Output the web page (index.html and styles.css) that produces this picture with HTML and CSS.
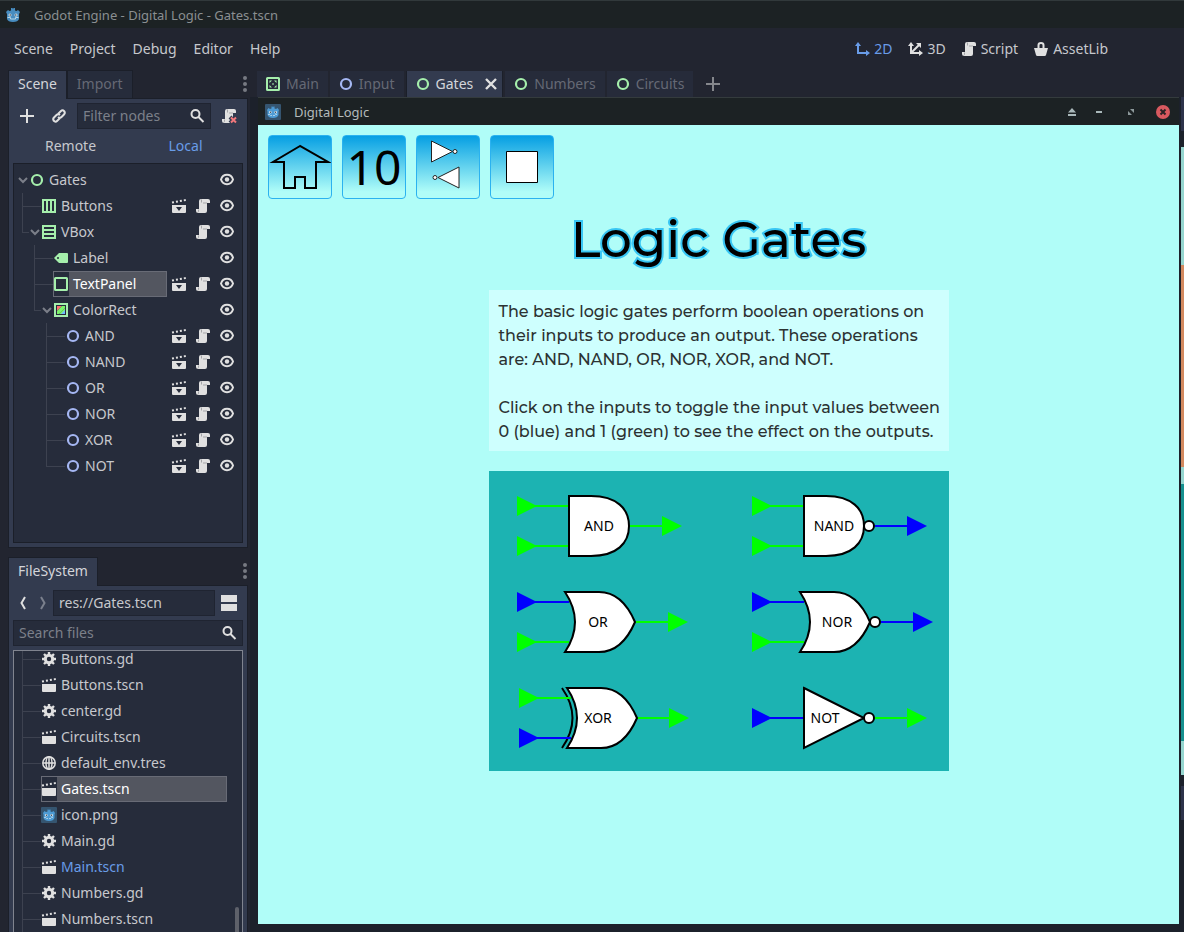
FILE: index.html
```html
<!DOCTYPE html>
<html lang="en">
<head>
<meta charset="utf-8">
<meta name="viewport" content="width=device-width, initial-scale=1">
<title>Godot Engine - Digital Logic - Gates.tscn</title>
<link rel="stylesheet" href="styles.css">
</head>
<body>
<svg class="sprite" aria-hidden="true">
  <symbol id="godot" viewBox="0 0 16 16"><path fill="#478cbf" d="M1 5l2-2 1.500 1L6 3.500V1h1.500L8 2l.5-1H10v2.500l1.500.5L13 3l2 2-1 2v5q-1 3-6 3t-6-3V7z"/><path fill="none" stroke="#b5d5e6" d="M2.500 10.500h3v1.500h5v-1.500h3"/><circle cx="5" cy="8" r="1.500" fill="#dceaf2"/><circle cx="11" cy="8" r="1.500" fill="#dceaf2"/><circle cx="5.200" cy="8" r=".8" fill="#3b4048"/><circle cx="10.800" cy="8" r=".8" fill="#3b4048"/></symbol>
  <symbol id="godot-tile" viewBox="0 0 16 16"><rect width="16" height="16" rx="1" fill="#355570"/><path fill="#4d9bd4" d="M2 6l1.500-2L5 5l1.500-.5V2.500h1L8 3.500l.5-1h1v2L11 5l1.500-1L14 6l-.5 1.500V11q-1 3-5.500 3t-5.500-3V7.500z"/><path fill="none" stroke="#a9cfe8" stroke-dasharray="2 1" d="M3 10.500h2.500v1h5v-1H13"/><circle cx="5.300" cy="8.200" r="1.300" fill="#dceaf2"/><circle cx="10.700" cy="8.200" r="1.300" fill="#dceaf2"/><circle cx="5.500" cy="8.200" r=".7" fill="#3b4048"/><circle cx="10.500" cy="8.200" r=".7" fill="#3b4048"/></symbol>
  <symbol id="ring" viewBox="0 0 16 16"><circle cx="8" cy="8" r="5" fill="none" stroke="currentColor" stroke-width="2.200"/></symbol>
  <symbol id="control" viewBox="0 0 16 16"><rect x="2" y="2" width="12" height="12" rx=".5" fill="none" stroke="currentColor" stroke-width="2"/></symbol>
  <symbol id="center" viewBox="0 0 16 16"><rect x="2" y="2" width="12" height="12" rx=".5" fill="none" stroke="currentColor" stroke-width="2"/><path fill="currentColor" d="M4.500 4.500h2.500L4.500 7zM11.500 4.500v2.500L9 4.500zM4.500 11.500V9L7 11.500zM11.500 11.500H9L11.500 9zM7.300 7.300h1.400v1.400H7.300z"/></symbol>
  <symbol id="hbox" viewBox="0 0 16 16"><path fill="none" stroke="currentColor" stroke-width="2" d="M2 2h12v12H2zM6 2v12M10 2v12"/></symbol>
  <symbol id="vbox" viewBox="0 0 16 16"><path fill="none" stroke="currentColor" stroke-width="2" d="M2 2h12v12H2zM2 6h12M2 10h12"/></symbol>
  <symbol id="label" viewBox="0 0 16 16"><path fill="currentColor" fill-rule="evenodd" d="M6 3L1 8l5 5h8q1 0 1-1V4q0-1-1-1zM5 7a1 1 0 1 1 0 2 1 1 0 0 1 0-2z"/></symbol>
  <symbol id="colorrect" viewBox="0 0 16 16"><path d="M2 2h12v12H2z" fill="#262c3b" stroke="#a5efac" stroke-width="2"/><path d="M4 4h5L4 9z" fill="#ff7070"/><path d="M9 4h3v2l-6 6H4V9z" fill="#7af56a"/><path d="M12 6v3l-3 3H6z" fill="#7af56a"/><path d="M12 8v4H8z" fill="#70bfff"/></symbol>
  <symbol id="script" viewBox="0 0 16 16"><path fill="currentColor" d="M6 1h7q2 0 2 2v2h-3v8q0 2-2 2H3q-2 0-2-2v-2h3V3q0-2 2-2z"/><path fill="none" stroke="#a4a5a8" d="M6.500 1.500v3M12 5H8M3.500 11.500v2q-.3 1-1 1"/></symbol>
  <symbol id="scene" viewBox="0 0 16 16"><path fill="currentColor" d="M1 7h14v7q0 1-1 1H2q-1 0-1-1z"/><path fill="none" stroke="currentColor" stroke-width="2" stroke-dasharray="2 2" d="M1 4.500L15 2"/></symbol>
  <symbol id="instance" viewBox="0 0 16 16"><path fill="currentColor" fill-rule="evenodd" d="M1 7h14v7q0 1-1 1H2q-1 0-1-1zM5 9h6l-3 4z"/><path fill="none" stroke="currentColor" stroke-width="2" stroke-dasharray="2 2" d="M1 4.500L15 2"/></symbol>
  <symbol id="eye" viewBox="0 0 16 16"><path fill="none" stroke="currentColor" stroke-width="2" d="M2 7.500q1.500-4.700 6-4.700t6 4.700q-1.500 4.700-6 4.700t-6-4.700z"/><circle cx="8" cy="7.500" r="2.200" fill="currentColor"/></symbol>
  <symbol id="chevron" viewBox="0 0 12 12"><path fill="none" stroke="#7b7f89" stroke-width="2" d="M2 4l4 4 4-4"/></symbol>
  <symbol id="gear" viewBox="0 0 16 16"><circle cx="8" cy="8" r="3.700" fill="none" stroke="currentColor" stroke-width="3"/><path stroke="currentColor" stroke-width="2.400" d="M8 1v3M8 12v3M1 8h3M12 8h3M3 3l2 2M11 11l2 2M13 3l-2 2M5 11l-2 2"/></symbol>
  <symbol id="globe" viewBox="0 0 16 16"><g fill="none" stroke="currentColor" stroke-width="1.500"><circle cx="8" cy="8" r="6.200"/><ellipse cx="8" cy="8" rx="3" ry="6.200"/><path d="M2 8h12M8 2v12"/></g></symbol>
  <symbol id="search" viewBox="0 0 16 16"><g fill="none" stroke="currentColor" stroke-width="2"><circle cx="6.500" cy="6" r="4"/><path d="M9.500 9l5 5"/></g></symbol>
  <symbol id="plus" viewBox="0 0 16 16"><path stroke="currentColor" stroke-width="2" d="M8 1v14M1 8h14"/></symbol>
  <symbol id="link" viewBox="0 0 16 16"><g fill="none" stroke="currentColor" stroke-width="2"><path d="M7 6l3-3q1.500-1.500 3.200.2Q14.500 5 13 6.500l-2.500 2.500q-1.500 1.500-3.500 0"/><path d="M9 10l-3 3q-1.500 1.500-3.200-.2Q1.500 11 3 9.500L5.500 7Q7 5.500 9 7"/></g></symbol>
  <symbol id="cross" viewBox="0 0 16 16"><path stroke="currentColor" stroke-width="2.400" d="M3 3l10 10M13 3L3 13"/></symbol>
  <symbol id="dots" viewBox="0 0 6 16"><g fill="currentColor"><circle cx="3" cy="2" r="2"/><circle cx="3" cy="8" r="2"/><circle cx="3" cy="14" r="2"/></g></symbol>
</svg>

<div class="app">
  <header class="titlebar"><svg class="icon"><use href="#godot"/></svg><span>Godot Engine - Digital Logic - Gates.tscn</span></header>

  <nav class="menubar">
    <button>Scene</button><button>Project</button><button>Debug</button><button>Editor</button><button>Help</button>
    <div class="modes">
      <button class="active"><svg class="icon" viewBox="0 0 16 16"><path fill="none" stroke="currentColor" stroke-width="2" d="M4 3v9h9"/><path fill="currentColor" d="M1 5l3-4 3 4zM12 9l4 3-4 3z"/></svg>2D</button>
      <button><svg class="icon" viewBox="0 0 16 16"><path fill="none" stroke="currentColor" stroke-width="2" d="M4 3v9h9M4 12l8-8"/><path fill="currentColor" d="M1 5l3-4 3 4zM12 9l4 3-4 3zM9 2h5v5z"/></svg>3D</button>
      <button><svg class="icon"><use href="#script"/></svg>Script</button>
      <button><svg class="icon" viewBox="0 0 16 16"><path fill="none" stroke="currentColor" stroke-width="2" d="M5.500 8V4q0-2 2.500-2t2.500 2v4"/><path fill="currentColor" d="M1 7h14l-2 7q-.3 1-1.300 1H4.300Q3.300 15 3 14z"/></svg>AssetLib</button>
    </div>
  </nav>

  <main class="workspace">
    <div class="docks">
      <section class="dock scene-dock">
        <div class="dock-tabs"><button class="tab active">Scene</button><button class="tab">Import</button><button class="more" aria-label="Dock options"><svg><use href="#dots"/></svg></button></div>
        <div class="dock-body">
          <div class="tools spaced">
            <button class="tool" aria-label="Add node"><svg class="icon"><use href="#plus"/></svg></button>
            <button class="tool" aria-label="Instance scene"><svg class="icon"><use href="#link"/></svg></button>
            <label class="field"><input type="text" placeholder="Filter nodes" aria-label="Filter nodes"><svg class="icon"><use href="#search"/></svg></label>
            <button class="tool" aria-label="Detach script"><svg class="icon" viewBox="0 0 16 16"><use href="#script"/><path stroke="#333b4f" stroke-width="4" d="M9 9l6 6M15 9l-6 6"/><path stroke="#f3787c" stroke-width="2" d="M10 9.500l5 5M15 9.500l-5 5"/></svg></button>
          </div>
          <div class="tools"><button class="half">Remote</button><button class="half active">Local</button></div>
          <ul class="tree">
            <li class="row"><svg class="cell"><use href="#chevron"/></svg><span class="item"><svg class="icon green"><use href="#ring"/></svg>Gates</span><svg class="icon"><use href="#eye"/></svg></li>
            <li class="row"><i class="cell tee"></i><i class="cell dash"></i><span class="item"><svg class="icon green"><use href="#hbox"/></svg>Buttons</span><svg class="icon"><use href="#instance"/></svg><svg class="icon"><use href="#script"/></svg><svg class="icon"><use href="#eye"/></svg></li>
            <li class="row"><i class="cell elbow"></i><svg class="cell"><use href="#chevron"/></svg><span class="item"><svg class="icon green"><use href="#vbox"/></svg>VBox</span><svg class="icon"><use href="#script"/></svg><svg class="icon"><use href="#eye"/></svg></li>
            <li class="row"><i class="cell"></i><i class="cell tee"></i><i class="cell dash"></i><span class="item"><svg class="icon green"><use href="#label"/></svg>Label</span><svg class="icon"><use href="#eye"/></svg></li>
            <li class="row"><i class="cell"></i><i class="cell tee"></i><i class="cell dash"></i><span class="item selected"><svg class="icon green"><use href="#control"/></svg>TextPanel</span><svg class="icon"><use href="#instance"/></svg><svg class="icon"><use href="#script"/></svg><svg class="icon"><use href="#eye"/></svg></li>
            <li class="row"><i class="cell"></i><i class="cell elbow"></i><svg class="cell"><use href="#chevron"/></svg><span class="item"><svg class="icon"><use href="#colorrect"/></svg>ColorRect</span><svg class="icon"><use href="#eye"/></svg></li>
            <li class="row"><i class="cell"></i><i class="cell"></i><i class="cell tee"></i><i class="cell dash"></i><span class="item"><svg class="icon blue"><use href="#ring"/></svg>AND</span><svg class="icon"><use href="#instance"/></svg><svg class="icon"><use href="#script"/></svg><svg class="icon"><use href="#eye"/></svg></li>
            <li class="row"><i class="cell"></i><i class="cell"></i><i class="cell tee"></i><i class="cell dash"></i><span class="item"><svg class="icon blue"><use href="#ring"/></svg>NAND</span><svg class="icon"><use href="#instance"/></svg><svg class="icon"><use href="#script"/></svg><svg class="icon"><use href="#eye"/></svg></li>
            <li class="row"><i class="cell"></i><i class="cell"></i><i class="cell tee"></i><i class="cell dash"></i><span class="item"><svg class="icon blue"><use href="#ring"/></svg>OR</span><svg class="icon"><use href="#instance"/></svg><svg class="icon"><use href="#script"/></svg><svg class="icon"><use href="#eye"/></svg></li>
            <li class="row"><i class="cell"></i><i class="cell"></i><i class="cell tee"></i><i class="cell dash"></i><span class="item"><svg class="icon blue"><use href="#ring"/></svg>NOR</span><svg class="icon"><use href="#instance"/></svg><svg class="icon"><use href="#script"/></svg><svg class="icon"><use href="#eye"/></svg></li>
            <li class="row"><i class="cell"></i><i class="cell"></i><i class="cell tee"></i><i class="cell dash"></i><span class="item"><svg class="icon blue"><use href="#ring"/></svg>XOR</span><svg class="icon"><use href="#instance"/></svg><svg class="icon"><use href="#script"/></svg><svg class="icon"><use href="#eye"/></svg></li>
            <li class="row"><i class="cell"></i><i class="cell"></i><i class="cell elbow"></i><i class="cell dash"></i><span class="item"><svg class="icon blue"><use href="#ring"/></svg>NOT</span><svg class="icon"><use href="#instance"/></svg><svg class="icon"><use href="#script"/></svg><svg class="icon"><use href="#eye"/></svg></li>
          </ul>
        </div>
      </section>

      <section class="dock files-dock">
        <div class="dock-tabs"><button class="tab active">FileSystem</button><button class="more" aria-label="Dock options"><svg><use href="#dots"/></svg></button></div>
        <div class="dock-body">
          <div class="tools">
            <button class="nav" aria-label="Back"><svg class="icon" viewBox="0 0 16 16"><path fill="none" stroke="currentColor" stroke-width="2" d="M10 2L6.500 8l3.500 6"/></svg></button>
            <button class="nav dim" aria-label="Forward"><svg class="icon" viewBox="0 0 16 16"><path fill="none" stroke="currentColor" stroke-width="2" d="M6 2l3.500 6L6 14"/></svg></button>
            <label class="field"><input type="text" value="res://Gates.tscn" aria-label="Path"></label>
            <button class="tool" aria-label="Split mode"><svg class="icon" viewBox="0 0 16 16"><path fill="currentColor" d="M0 0h16v7H0zM0 9h16v7H0z"/></svg></button>
          </div>
          <label class="field"><input type="text" placeholder="Search files" aria-label="Search files"><svg class="icon"><use href="#search"/></svg></label>
          <div class="files">
            <ul class="file-list">
              <li class="row"><i class="cell tee"></i><i class="cell dash"></i><span class="item"><svg class="icon"><use href="#gear"/></svg>Buttons.gd</span></li>
              <li class="row"><i class="cell tee"></i><i class="cell dash"></i><span class="item"><svg class="icon"><use href="#scene"/></svg>Buttons.tscn</span></li>
              <li class="row"><i class="cell tee"></i><i class="cell dash"></i><span class="item"><svg class="icon"><use href="#gear"/></svg>center.gd</span></li>
              <li class="row"><i class="cell tee"></i><i class="cell dash"></i><span class="item"><svg class="icon"><use href="#scene"/></svg>Circuits.tscn</span></li>
              <li class="row"><i class="cell tee"></i><i class="cell dash"></i><span class="item"><svg class="icon"><use href="#globe"/></svg>default_env.tres</span></li>
              <li class="row"><i class="cell tee"></i><i class="cell dash"></i><span class="item selected"><svg class="icon"><use href="#scene"/></svg>Gates.tscn</span></li>
              <li class="row"><i class="cell tee"></i><i class="cell dash"></i><span class="item"><svg class="icon"><use href="#godot-tile"/></svg>icon.png</span></li>
              <li class="row"><i class="cell tee"></i><i class="cell dash"></i><span class="item"><svg class="icon"><use href="#gear"/></svg>Main.gd</span></li>
              <li class="row"><i class="cell tee"></i><i class="cell dash"></i><span class="item main-scene"><svg class="icon"><use href="#scene"/></svg>Main.tscn</span></li>
              <li class="row"><i class="cell tee"></i><i class="cell dash"></i><span class="item"><svg class="icon"><use href="#gear"/></svg>Numbers.gd</span></li>
              <li class="row"><i class="cell tee"></i><i class="cell dash"></i><span class="item"><svg class="icon"><use href="#scene"/></svg>Numbers.tscn</span></li>
            </ul>
            <div class="track"><div class="thumb"></div></div>
          </div>
        </div>
      </section>
    </div>

    <div class="editor">
      <div class="scene-tabs">
        <button class="stab"><svg class="icon green"><use href="#center"/></svg>Main</button>
        <button class="stab"><svg class="icon blue"><use href="#ring"/></svg>Input</button>
        <button class="stab active"><svg class="icon green"><use href="#ring"/></svg>Gates<svg class="icon close"><use href="#cross"/></svg></button>
        <button class="stab"><svg class="icon green"><use href="#ring"/></svg>Numbers</button>
        <button class="stab"><svg class="icon green"><use href="#ring"/></svg>Circuits</button>
        <button class="add" aria-label="New scene"><svg class="icon"><use href="#plus"/></svg></button>
      </div>
      <div class="stage">
        <section class="window">
          <header class="window-bar">
            <svg class="icon"><use href="#godot-tile"/></svg><h2>Digital Logic</h2>
            <div class="controls">
              <div class="pair">
                <button aria-label="Keep above"><svg class="icon" viewBox="0 0 16 16"><path fill="#a9b8ba" d="M4 8.500L8 4l4 4.500zM4 10h8v2H4z"/></svg></button>
                <button aria-label="Minimize"><svg class="icon" viewBox="0 0 16 16"><path fill="#a9b8ba" d="M5 7h6v2H5z"/></svg></button>
              </div>
              <button aria-label="Maximize"><svg class="icon" viewBox="0 0 16 16"><path fill="#8d999b" d="M7 5h4v4zM5 7l4 4H5z"/></svg></button>
              <button aria-label="Close"><svg class="icon" viewBox="0 0 16 16"><circle cx="8" cy="8" r="7" fill="#d8595f"/><path stroke="#2a2326" stroke-width="2" d="M5.500 5.500l5 5M10.500 5.500l-5 5"/></svg></button>
            </div>
          </header>
          <div class="game">
            <div class="game-buttons">
              <button aria-label="Home"><svg viewBox="0 0 62 62"><path fill="none" stroke="#000" stroke-width="2" d="M31 10L4 26h11v26h11V41h10v11h11V26h12z"/></svg></button>
              <button class="digits">10</button>
              <button aria-label="Gates"><svg viewBox="0 0 62 62"><g fill="#fff" stroke="#222"><path d="M14.500 5l21 10.500L14.500 26zM42 31v21L21 41.500z"/><circle cx="38" cy="15.500" r="2"/><circle cx="18" cy="41.500" r="2"/></g></svg></button>
              <button aria-label="Circuits"><svg viewBox="0 0 62 62"><path fill="#fff" stroke="#000" d="M15.500 15.500h31v31h-31z"/></svg></button>
            </div>
            <div class="column">
              <h1>Logic Gates</h1>
              <div class="intro">
                <p>The basic logic gates perform boolean operations on<br>their inputs to produce an output. These operations<br>are: AND, NAND, OR, NOR, XOR, and NOT.</p>
                <p>Click on the inputs to toggle the input values between<br>0 (blue) and 1 (green) to see the effect on the outputs.</p>
              </div>
              <svg class="gates" viewBox="0 0 460 300" role="img" aria-label="Six logic gates">
                <defs>
                  <g id="wire-in"><path d="M0-10L20 0L0 10z"/><path d="M18-1h34v2H18z"/></g>
                  <g id="wire-out"><path d="M0-1h33v2H0z"/><path d="M32-10L52 0L32 10z"/></g>
                  <path id="and-body" d="M0-30H22C48-30 60-17 60 0S48 30 22 30H0z"/>
                  <path id="or-body" d="M0-30H34C53-30 64-14 70 0C64 14 53 30 34 30H0Q20 0 0-30z"/>
                </defs>
                <g fill="#0f0">
                  <use href="#wire-in" x="28" y="35"/><use href="#wire-in" x="28" y="75"/><use href="#wire-out" x="141" y="55"/>
                  <use href="#wire-in" x="263" y="35"/><use href="#wire-in" x="263" y="75"/>
                  <use href="#wire-in" x="28" y="171"/><use href="#wire-out" x="147" y="151"/>
                  <use href="#wire-in" x="263" y="171"/>
                  <use href="#wire-out" x="148" y="247"/><use href="#wire-out" x="386" y="247"/>
                </g>
                <g fill="#00f">
                  <use href="#wire-out" x="386" y="55"/>
                  <use href="#wire-in" x="28" y="131"/><use href="#wire-in" x="263" y="131"/><use href="#wire-out" x="392" y="151"/>
                  <use href="#wire-in" x="263" y="247"/>
                </g>
                <g fill="#fff" stroke="#000" stroke-width="2">
                  <use href="#and-body" x="80" y="55"/><use href="#and-body" x="315" y="55"/><circle cx="380" cy="55" r="5"/>
                  <use href="#or-body" x="76" y="151"/><use href="#or-body" x="311" y="151"/><circle cx="386" cy="151" r="5"/>
                  <use href="#or-body" x="78" y="247"/><path fill="none" d="M73 217Q94 247 73 277"/>
                  <path d="M315 217l60 30-60 30z"/><circle cx="380" cy="247" r="5"/>
                </g>
                <use href="#wire-in" x="30" y="227" fill="#0f0"/><use href="#wire-in" x="30" y="267" fill="#00f"/>
                <g class="gate-names"><text x="110" y="60">AND</text><text x="345" y="60">NAND</text><text x="109" y="156">OR</text><text x="348" y="156">NOR</text><text x="109" y="252">XOR</text><text x="336" y="252">NOT</text></g>
              </svg>
            </div>
          </div>
        </section>
        <div class="behind"></div>
      </div>
    </div>
  </main>
</div>
</body>
</html>
```
FILE: styles.css
```css
* { box-sizing: border-box; }
body { margin: 0; background: #222530; color: #c6c8cd; font: 14px/20px "Noto Sans", sans-serif; }
button { margin: 0; padding: 0; border: 0; background: none; color: inherit; font: inherit; }
ul { margin: 0; padding: 0; list-style: none; }
svg { display: block; flex: none; }
.sprite { position: absolute; width: 0; height: 0; }
.icon { width: 16px; height: 16px; color: #e0e0e0; }
.green { color: #a5efac; }
.blue { color: #a5b7f3; }

.app { display: flex; flex-direction: column; height: 100vh; overflow: hidden; }
.titlebar { display: flex; align-items: center; gap: 13px; height: 28px; padding: 0 5px; background: #1c2224; border-top: 1px solid #31393b; color: #8a8f91; font-size: 13px; flex: none; }
.menubar { display: flex; align-items: center; gap: 17px; height: 42px; padding: 0 76px 0 14px; flex: none; }
.modes { display: flex; gap: 15px; margin-left: auto; }
.modes button { display: flex; align-items: center; gap: 4px; }
.modes .active, .modes .active .icon, .half.active, .main-scene { color: #699ce8; }

.workspace { display: flex; flex: 1; min-height: 0; }
.docks { display: flex; flex-direction: column; gap: 9px; width: 250px; padding-left: 8px; flex: none; }
.dock { display: flex; flex-direction: column; min-height: 0; }
.scene-dock { flex: 478 1 0; }
.files-dock { flex: 375 1 0; }
.dock-tabs { display: flex; height: 28px; flex: none; }
.tab { height: 28px; padding: 0 9px 2px; border: 1px solid #1b1f29; border-width: 1px 1px 0; background: #262c3b; color: #656975; }
.tab.active { height: 29px; background: #333b4f; color: #d3d5da; z-index: 1; }
.more { margin-left: auto; padding-right: 2px; color: #777a82; }
.more svg { width: 6px; height: 16px; }
.dock-body { display: flex; flex-direction: column; gap: 4px; flex: 1; min-height: 0; width: 240px; padding: 4px; background: #333b4f; border: 1px solid #1b1f29; }
.files-dock .dock-body { padding-bottom: 0; border-bottom: 0; }
.tools { display: flex; height: 26px; flex: none; }
.tools.spaced { gap: 4px; }
.tool, .nav { display: flex; align-items: center; justify-content: center; width: 28px; flex: none; }
.nav { width: 20px; }
.dim .icon { color: #7b808d; }
.half { flex: 1; }
.field { display: flex; align-items: center; flex: 1; min-width: 0; height: 26px; padding: 0 5px; background: #262c3b; border: 1px solid #1f2431; }
.dock-body > .field { flex: none; }
.field input { flex: 1; min-width: 0; width: 0; padding: 0; border: 0; outline: 0; background: none; color: #c6c8cd; font: inherit; }
.field input::placeholder { color: #7c808a; opacity: 1; }

.tree { flex: 1; min-height: 0; overflow: hidden; padding: 3px 7px 3px 3px; background: #262c3b; border: 1px solid #1b1f29; }
.row { display: flex; align-items: center; height: 26px; }
.row > .icon { margin-left: 8px; }
.row > .item + .icon { margin-left: 4px; }
.cell { width: 12px; height: 12px; }
i.cell { height: 26px; flex: none; }
.tee { background: linear-gradient(#3d4250, #3d4250) 5px 0 / 1px 26px no-repeat, linear-gradient(#3d4250, #3d4250) 5px 13px / 7px 1px no-repeat; }
.elbow { background: linear-gradient(#3d4250, #3d4250) 5px 0 / 1px 13px no-repeat, linear-gradient(#3d4250, #3d4250) 5px 13px / 7px 1px no-repeat; }
.dash { background: linear-gradient(#3d4250, #3d4250) 0 13px / 12px 1px no-repeat; }
.item { display: flex; align-items: center; gap: 4px; flex: 1; min-width: 0; height: 26px; }
.selected { background: linear-gradient(90deg, #262c3b 16px, #535660 16px); box-shadow: inset 0 0 0 1px #686b76; color: #fff; }
.files { display: flex; flex: 1; min-height: 0; overflow: hidden; background: #262c3b; border: 1px solid #80848f; border-bottom: 0; }
.file-list { flex: 1; margin-top: -5px; padding-left: 3px; }
.track { display: flex; flex-direction: column; justify-content: flex-end; width: 15px; padding: 0 3px 0 8px; }
.thumb { height: 25px; background: #5e616a; border-radius: 2px 2px 0 0; }

.editor { display: flex; flex-direction: column; flex: 1; min-width: 0; }
.scene-tabs { display: flex; gap: 2px; height: 27px; padding: 1px 0 0 7px; flex: none; }
.stab { display: flex; align-items: center; gap: 5px; padding: 0 9px 0 8px; background: #262b3a; color: #656975; }
.stab.active { padding-right: 3px; background: #333b4f; color: #d3d5da; border: 1px solid #1b1f29; border-width: 0 1px; }
.close { margin-left: 5px; }
.add { padding: 0 10px; }
.add .icon { color: #85878c; }
.stage { display: flex; gap: 2px; flex: 1; min-height: 0; padding: 0 0 8px 8px; background: #1c212b; }
.window { display: flex; flex-direction: column; flex: 1; min-width: 0; }
.window-bar { display: flex; align-items: center; gap: 13px; height: 28px; padding: 0 8px 0 7px; background: #1c2224; border-top: 1px solid #343b3d; flex: none; }
.window-bar h2 { margin: 0; font-size: 13px; font-weight: 400; color: #b3babb; }
.controls { display: flex; gap: 16px; margin-left: auto; }
.pair { display: flex; gap: 11px; }
.behind { width: 3px; background: linear-gradient(#2d334a 34px, #1c212b 34px 50px, #96d6d0 50px 168px, #d3895f 168px 370px, #96d6d0 370px 387px, #16908f 387px 644px, #96d6d0 644px 678px, #1c212b 678px 689px, #2d334a 689px 723px, #1c212b 723px); }

.game { display: flex; flex-direction: column; flex: 1; min-height: 0; padding: 10px; overflow: hidden; background: #b0fdf8; }
.game-buttons { display: flex; gap: 10px; }
.game-buttons button { width: 64px; height: 64px; border: 1px solid #2bb2f0; border-radius: 4px; background: linear-gradient(#069fe3, #b0fdf8 90%); color: #000; }
.game-buttons svg { width: 62px; height: 62px; }
.digits { font-size: 48px; line-height: 60px; }
.column { display: flex; flex-direction: column; align-items: center; gap: 20px; padding-top: 11px; }
h1 { margin: 0; font: 500 50px/60px Montserrat, Inter, sans-serif; color: #000; -webkit-text-stroke: 4px #38c6f4; paint-order: stroke fill; }
.intro { width: 460px; max-width: 100%; padding: 10px 10px 7px; background: #cefffe; color: #2c3232; font: 500 16px/24px Montserrat, Inter, sans-serif; white-space: nowrap; }
.intro p { margin: 0; }
.intro p + p { margin-top: 24px; }
.gates { width: 460px; max-width: 100%; background: #1cb3b2; }
.gate-names { font-size: 14px; text-anchor: middle; fill: #000; }
```
